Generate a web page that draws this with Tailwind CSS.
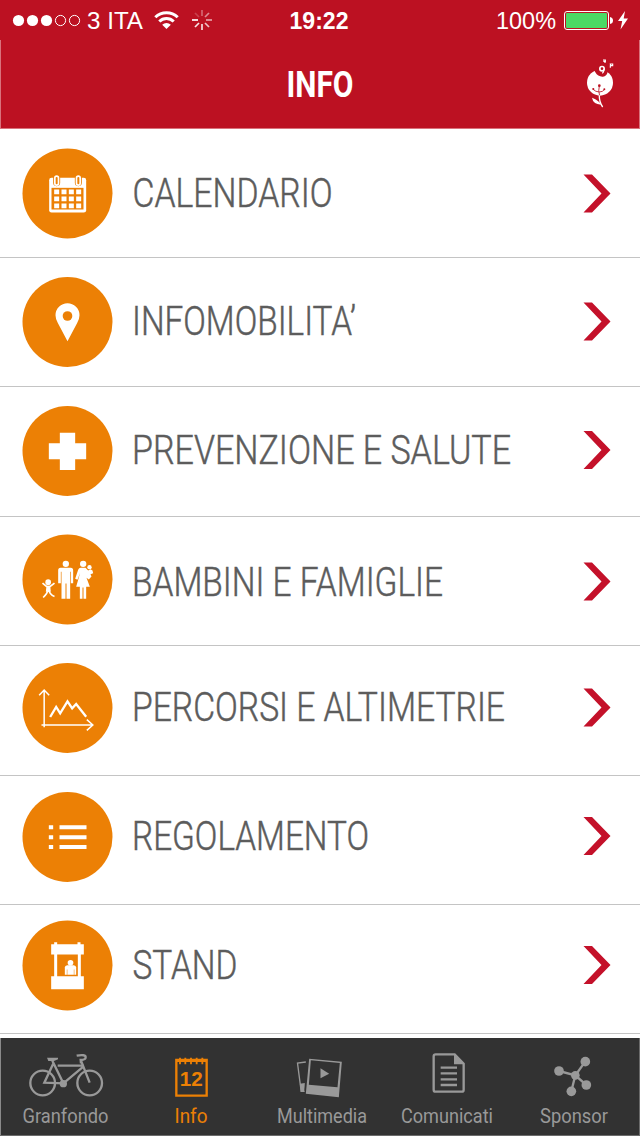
<!DOCTYPE html>
<html lang="it">
<head>
    <meta charset="UTF-8">
    <meta name="viewport" content="width=device-width, initial-scale=1.0">
    <title>Info</title>
    <script src="https://cdn.jsdelivr.net/npm/@tailwindcss/browser@4"></script>
</head>
<body class="bg-white font-['Roboto',sans-serif]">
    <div class="w-[640px] h-[1136px] overflow-hidden flex flex-col">

        <!-- Status bar -->
        <div class="h-10 shrink-0 bg-[#bc1122]">
            <svg class="block w-[640px] h-10 font-['Liberation_Sans',sans-serif] fill-white" viewBox="0 0 640 40">
                <circle cx="18.5" cy="20.5" r="5.6"/>
                <circle cx="32.5" cy="20.5" r="5.6"/>
                <circle cx="46.5" cy="20.5" r="5.6"/>
                <circle cx="60.5" cy="20.5" r="5.1" fill="none" stroke="#fff"/>
                <circle cx="74.5" cy="20.5" r="5.1" fill="none" stroke="#fff"/>
                <text x="87" y="29" font-size="24" textLength="56" lengthAdjust="spacingAndGlyphs">3 ITA</text>
                <g fill="none" stroke="#fff" stroke-width="3">
                    <path d="M155.3 17.2a16 16 0 0 1 22.4 0"/>
                    <path d="M159.3 21.5a10.2 10.2 0 0 1 14.4 0"/>
                </g>
                <path d="M166.500 29l-4.300-4.300a6 6 0 0 1 8.600 0z"/>
                <g stroke="#fff" stroke-width="1.7">
                    <path d="M192 20h6"/>
                    <path d="M195 27l4-4" opacity=".9"/>
                    <path d="M202 24v6" opacity=".85"/>
                    <path d="M205 23l4 4" opacity=".75"/>
                    <path d="M206 20h6" opacity=".6"/>
                    <path d="M205 17l4-4" opacity=".5"/>
                    <path d="M202 10v6" opacity=".35"/>
                    <path d="M195 13l4 4" opacity=".2"/>
                </g>
                <text x="289.500" y="29" font-size="23.500" font-weight="700" textLength="59" lengthAdjust="spacingAndGlyphs">19:22</text>
                <text x="496" y="29" font-size="24" textLength="60" lengthAdjust="spacingAndGlyphs">100%</text>
                <rect x="564.500" y="11.500" width="44" height="18" rx="2.500" fill="none" stroke="#fff"/>
                <rect x="566" y="13" width="41" height="15" rx="1" fill="#4cd964"/>
                <path d="M610 17q3 .5 3 3.500t-3 3.500z"/>
                <path d="M625 11l-7 10h4.200l-1.700 8.500 7.500-11h-4.300z"/>
            </svg>
        </div>

        <!-- Title bar -->
        <div class="h-[89px] shrink-0 bg-[#bc1122] border-x border-b border-[#d9727c] flex items-start justify-end">
            <svg class="w-[120px] h-[60px] mt-[20px] mr-[190px] fill-white" viewBox="0 0 120 60">
                <text x="26.500" y="36.500" font-size="36" font-weight="700" textLength="67" lengthAdjust="spacingAndGlyphs">INFO</text>
            </svg>
            <svg class="w-[60px] h-[70px] mt-[10px] mr-[9px]" viewBox="0 0 180 210">
                <circle cx="90" cy="98" r="39" fill="#fff"/>
                <path d="M69 55L76 67Q84 81 99 80Q110 79 113 66L118 54z" fill="#bc1122"/>
                <circle cx="96" cy="56" r="6.500" fill="none" stroke="#fff" stroke-width="5"/>
                <path d="M102 57q0 9-5 13M99 30h7v4h-6M105 34v5M121 42h7v5h-6zM121 46v7" fill="none" stroke="#fff" stroke-width="3.500"/>
                <path d="M88 108Q84 120 89 138M68 117Q77 126 88 126Q98 126 104 118" fill="none" stroke="#bc1122" stroke-width="2.500"/>
                <circle cx="88" cy="107" r="4" fill="#bc1122"/>
                <circle cx="70" cy="117" r="3" fill="#bc1122"/>
                <circle cx="103" cy="118" r="3" fill="#bc1122"/>
                <path d="M88 136Q87 155 98 171" fill="none" stroke="#fff" stroke-width="4"/>
                <path d="M66 143Q69 162 93 164Q88 152 66 143z" fill="#fff"/>
            </svg>
        </div>

        <!-- Menu -->
        <div class="h-[909px] shrink-0 overflow-hidden">
            <div class="h-[129px] border-b border-[#c4c4c4] flex items-start pl-[22px] pt-[19px]">
                <svg class="w-[90px] h-[90px] shrink-0 overflow-visible" viewBox="-1.500 -1.500 270 270">
                    <circle cx="135" cy="135" r="135" fill="#ec8005"/>
                    <rect x="80" y="88" width="111" height="104" rx="7" fill="#fff"/>
                    <rect x="87" y="118" width="96" height="65" fill="#ec8005"/>
                    <path d="M95 123h15v14h-15zM117 123h15v14h-15zM139 123h15v14h-15zM161 123h15v14h-15zM95 144h15v14h-15zM117 144h15v14h-15zM139 144h15v14h-15zM161 144h15v14h-15zM95 165h15v14h-15zM117 165h15v14h-15zM139 165h15v14h-15zM161 165h15v14h-15z" fill="#fff"/>
                    <rect x="92" y="78" width="21" height="35" rx="10" fill="#ec8005"/>
                    <rect x="157" y="78" width="21" height="35" rx="10" fill="#ec8005"/>
                    <rect x="97" y="83" width="11" height="27" rx="5.500" fill="#ec8005" stroke="#fff" stroke-width="5"/>
                    <rect x="162" y="83" width="11" height="27" rx="5.500" fill="#ec8005" stroke="#fff" stroke-width="5"/>
                </svg>
                <svg class="w-[500px] h-[90px] ml-[18px] shrink-0" viewBox="130 0 500 90">
                    <text x="132.500" y="59" font-size="41" font-weight="300" fill="#5c5c5c" stroke="#5c5c5c" stroke-width=".5" textLength="200" lengthAdjust="spacingAndGlyphs">CALENDARIO</text>
                    <path d="M583.500 26.500h8.500l18.500 19-18.500 19h-8.500l18-19z" fill="#c4112a"/>
                </svg>
            </div>

            <div class="h-[129px] border-b border-[#c4c4c4] flex items-start pl-[22px] pt-[19px]">
                <svg class="w-[90px] h-[90px] shrink-0 overflow-visible" viewBox="-1.500 0 270 270">
                    <circle cx="135" cy="135" r="135" fill="#ec8005"/>
                    <path d="M135 193L106 138Q99 126 99 115A36 36 0 0 1 171 115Q171 126 164 138z" fill="#fff"/>
                    <circle cx="135" cy="117" r="14.500" fill="#ec8005"/>
                </svg>
                <svg class="w-[500px] h-[90px] ml-[18px] shrink-0" viewBox="130 0 500 90">
                    <text x="132" y="58.300" font-size="41" font-weight="300" fill="#5c5c5c" stroke="#5c5c5c" stroke-width=".5" textLength="224" lengthAdjust="spacingAndGlyphs">INFOMOBILITA’</text>
                    <path d="M583.500 25.500h8.500l18.500 19-18.500 19h-8.500l18-19z" fill="#c4112a"/>
                </svg>
            </div>

            <div class="h-[130px] border-b border-[#c4c4c4] flex items-start pl-[22px] pt-[19px]">
                <svg class="w-[90px] h-[90px] shrink-0 overflow-visible" viewBox="-1.500 0 270 270">
                    <circle cx="135" cy="135" r="135" fill="#ec8005"/>
                    <path d="M112 80h46v32h33v48h-33v32h-46v-32h-33v-48h33z" fill="#fff"/>
                </svg>
                <svg class="w-[500px] h-[90px] ml-[18px] shrink-0" viewBox="130 0 500 90">
                    <text x="132" y="58" font-size="41" font-weight="300" fill="#5c5c5c" stroke="#5c5c5c" stroke-width=".5" textLength="379" lengthAdjust="spacingAndGlyphs">PREVENZIONE E SALUTE</text>
                    <path d="M583.500 25h8.500l18.500 19-18.500 19h-8.500l18-19z" fill="#c4112a"/>
                </svg>
            </div>

            <div class="h-[129px] border-b border-[#c4c4c4] flex items-start pl-[22px] pt-[17px]">
                <svg class="w-[90px] h-[90px] shrink-0 overflow-visible" viewBox="-1.500 -1.500 270 270">
                    <circle cx="135" cy="135" r="135" fill="#ec8005"/>
                    <g fill="#fff">
                        <circle cx="77" cy="143" r="8.500"/>
                        <circle cx="130" cy="88" r="9.500"/>
                        <path d="M114 100h31q7 0 7 8v38h-7v-34h-2v81h-11v-46h-3v46h-12v-81h-2v34h-8v-38q0-8 7-8z"/>
                        <circle cx="182" cy="88" r="9.500"/>
                        <path d="M175 100h14l8 8 7-4 6 4 2 8-8 3 3 7-8 9-7-5 10 27h-11v36h-8v-34h-3v34h-8v-36h-11l12-42-8 21-7-3 9-27q2-6 8-6z"/>
                        <circle cx="201" cy="98" r="6.500"/>
                        <path d="M72 154h11l2 18h-15z"/>
                    </g>
                    <path d="M60 146l12 10h11l13-10M76 166q0 10-14 23M79 166q2 14 17 20" fill="none" stroke="#fff" stroke-width="5"/>
                </svg>
                <svg class="w-[500px] h-[90px] ml-[18px] shrink-0" viewBox="130 0 500 90">
                    <text x="132" y="61.500" font-size="41" font-weight="300" fill="#5c5c5c" stroke="#5c5c5c" stroke-width=".5" textLength="311" lengthAdjust="spacingAndGlyphs">BAMBINI E FAMIGLIE</text>
                    <path d="M583.500 28.500h8.500l18.500 19-18.500 19h-8.500l18-19z" fill="#c4112a"/>
                </svg>
            </div>

            <div class="h-[130px] border-b border-[#c4c4c4] flex items-start pl-[22px] pt-[17px]">
                <svg class="w-[90px] h-[90px] shrink-0 overflow-visible" viewBox="-1.500 0 270 270">
                    <circle cx="135" cy="135" r="135" fill="#ec8005"/>
                    <g fill="none" stroke="#fff">
                        <path d="M65 193V81M50 97l15-16 15 16M57 186h153M193 170l18 16-18 16" stroke-width="4.500"/>
                        <path d="M83 162l18-30 12 19 22-36 14 21 12-13 30 38" stroke-width="7"/>
                    </g>
                </svg>
                <svg class="w-[500px] h-[90px] ml-[18px] shrink-0" viewBox="130 0 500 90">
                    <text x="132" y="58.300" font-size="41" font-weight="300" fill="#5c5c5c" stroke="#5c5c5c" stroke-width=".5" textLength="373" lengthAdjust="spacingAndGlyphs">PERCORSI E ALTIMETRIE</text>
                    <path d="M583.500 25.500h8.500l18.500 19-18.500 19h-8.500l18-19z" fill="#c4112a"/>
                </svg>
            </div>

            <div class="h-[129px] border-b border-[#c4c4c4] flex items-start pl-[22px] pt-[16px]">
                <svg class="w-[90px] h-[90px] shrink-0 overflow-visible" viewBox="-1.500 0 270 270">
                    <circle cx="135" cy="135" r="135" fill="#ec8005"/>
                    <path d="M79 100h13v12h-13zM79 130h13v12h-13zM79 159h13v12h-13zM111 100h81v12h-81zM111 130h81v12h-81zM111 159h81v12h-81z" fill="#fff"/>
                </svg>
                <svg class="w-[500px] h-[90px] ml-[18px] shrink-0" viewBox="130 0 500 90">
                    <text x="132" y="58" font-size="41" font-weight="300" fill="#5c5c5c" stroke="#5c5c5c" stroke-width=".5" textLength="237" lengthAdjust="spacingAndGlyphs">REGOLAMENTO</text>
                    <path d="M583.500 25h8.500l18.500 19-18.500 19h-8.500l18-19z" fill="#c4112a"/>
                </svg>
            </div>

            <div class="h-[129px] border-b border-[#c4c4c4] flex items-start pl-[22px] pt-[15px]">
                <svg class="w-[90px] h-[90px] shrink-0 overflow-visible" viewBox="-1.500 -1.500 270 270">
                    <circle cx="135" cy="135" r="135" fill="#ec8005"/>
                    <path d="M86 71h9v-6h9v6h61v-6h9v6h10v31h-9v65h9v39h-98v-39h9v-65h-9zM104 102v65h62v-65z" fill="#fff" fill-rule="evenodd"/>
                    <circle cx="144" cy="127" r="8.500" fill="#fff"/>
                    <path d="M127 163v-22q0-6 7-7h20q7 1 7 7v22z" fill="#fff"/>
                    <path d="M134 163v-16M155 163v-16" stroke="#ec8005" stroke-width="1.500"/>
                </svg>
                <svg class="w-[500px] h-[90px] ml-[18px] shrink-0" viewBox="130 0 500 90">
                    <text x="132.500" y="58.500" font-size="41" font-weight="300" fill="#5c5c5c" stroke="#5c5c5c" stroke-width=".5" textLength="105" lengthAdjust="spacingAndGlyphs">STAND</text>
                    <path d="M583.500 26h8.500l18.500 19-18.500 19h-8.500l18-19z" fill="#c4112a"/>
                </svg>
            </div>
        </div>

        <!-- Tab bar -->
        <div class="h-[98px] shrink-0 bg-[#323232] border-b border-[#6b6b6b] shadow-[inset_1px_0_0_#8a8a8a,inset_-1px_0_0_#6b6b6b] flex pt-3">
            <div class="w-[132px] flex flex-col items-center">
                <svg class="w-[84px] h-[50px]" viewBox="72 60 252 150">
                    <g fill="none" stroke="#999" stroke-width="7">
                        <circle cx="128" cy="159" r="37"/>
                        <circle cx="269" cy="159" r="37"/>
                        <path d="M157 92L190 160L133 158L161 98M173 107H252M190 160L250 110M243 92L269 158"/>
                        <path d="M230 77Q257 72 257 82Q257 90 242 90L243 100"/>
                    </g>
                    <path d="M141 83h33v5l-12 5h-17z" fill="#999"/>
                    <circle cx="190" cy="161" r="11" fill="#999"/>
                </svg>
                <svg class="w-[120px] h-[30px]" viewBox="-60 0 120 30">
                    <text x="-43.500" y="23" font-size="21" fill="#999" textLength="86" lengthAdjust="spacingAndGlyphs">Granfondo</text>
                </svg>
            </div>
            <div class="w-[118px] flex flex-col items-center">
                <svg class="w-[84px] h-[50px]" viewBox="447 60 252 150">
                    <path d="M529 90h91v107h-91z" fill="none" stroke="#ec8005" stroke-width="7"/>
                    <path d="M529 93h91M540 83v20M556 83v20M573 83v20M590 83v20M607 83v20" fill="none" stroke="#ec8005" stroke-width="5.500"/>
                    <text x="539" y="167" font-family="Liberation Sans, sans-serif" font-size="60" font-weight="700" fill="#ec8005" textLength="69" lengthAdjust="spacingAndGlyphs">12</text>
                </svg>
                <svg class="w-[100px] h-[30px]" viewBox="-50 0 100 30">
                    <text x="-16.500" y="23" font-size="21" fill="#ec8005" textLength="33" lengthAdjust="spacingAndGlyphs">Info</text>
                </svg>
            </div>
            <div class="w-[143px] flex flex-col items-center">
                <svg class="w-[84px] h-[50px]" viewBox="88.500 60 252 150">
                    <path d="M166 96L141 99L152 184H162" fill="none" stroke="#999" stroke-width="4"/>
                    <path d="M148 161L163 159L161 186H151z" fill="#999"/>
                    <path d="M176 86L274 95L265 202L166 191zM181 91L175 164L261 172L268 99z" fill="#999" fill-rule="evenodd"/>
                    <path d="M210 115L236 131L210 145z" fill="#999"/>
                </svg>
                <svg class="w-[120px] h-[30px]" viewBox="-60 0 120 30">
                    <text x="-45" y="23" font-size="21" fill="#999" textLength="90" lengthAdjust="spacingAndGlyphs">Multimedia</text>
                </svg>
            </div>
            <div class="w-[108px] flex flex-col items-center">
                <svg class="w-[84px] h-[50px]" viewBox="465 60 252 150">
                    <path d="M557 73H614L641 101V179Q641 185 635 185H557Q551 185 551 179V79Q551 73 557 73z" fill="none" stroke="#999" stroke-width="7"/>
                    <path d="M612 72V103H643z" fill="#999"/>
                    <path d="M572 113h49M572 130h49M572 148h49M572 165h49" stroke="#999" stroke-width="7"/>
                </svg>
                <svg class="w-[108px] h-[30px]" viewBox="-54 0 108 30">
                    <text x="-46" y="23" font-size="21" fill="#999" textLength="92" lengthAdjust="spacingAndGlyphs">Comunicati</text>
                </svg>
            </div>
            <div class="w-[139px] pl-[7px] flex flex-col items-center">
                <svg class="w-[84px] h-[50px]" viewBox="846 60 252 150">
                    <path d="M927 123L976 136L1006 94M976 136L1009 165M976 136L964 184" fill="none" stroke="#999" stroke-width="7"/>
                    <g fill="#999">
                        <circle cx="927" cy="123" r="14.500"/>
                        <circle cx="1006" cy="95" r="14.500"/>
                        <circle cx="976" cy="136" r="13"/>
                        <circle cx="1009" cy="165" r="14.500"/>
                        <circle cx="964" cy="184" r="14.500"/>
                    </g>
                </svg>
                <svg class="w-[100px] h-[30px]" viewBox="-50 0 100 30">
                    <text x="-34" y="23" font-size="21" fill="#999" textLength="68" lengthAdjust="spacingAndGlyphs">Sponsor</text>
                </svg>
            </div>
        </div>
    </div>
</body>
</html>
